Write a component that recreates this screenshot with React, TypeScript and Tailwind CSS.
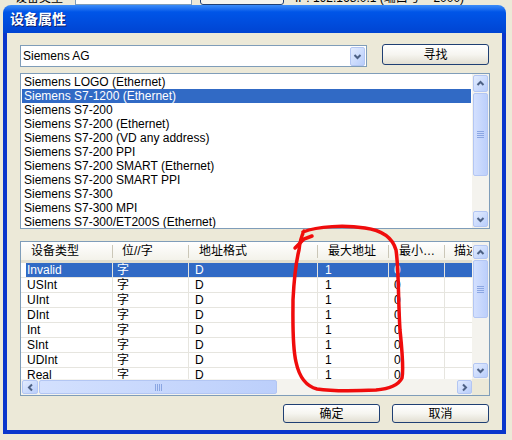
import React from 'react';

const devices = [
  'Siemens LOGO (Ethernet)',
  'Siemens S7-1200 (Ethernet)',
  'Siemens S7-200',
  'Siemens S7-200 (Ethernet)',
  'Siemens S7-200 (VD any address)',
  'Siemens S7-200 PPI',
  'Siemens S7-200 SMART (Ethernet)',
  'Siemens S7-200 SMART PPI',
  'Siemens S7-300',
  'Siemens S7-300 MPI',
  'Siemens S7-300/ET200S (Ethernet)',
];

const types = ['Invalid', 'USInt', 'UInt', 'DInt', 'Int', 'SInt', 'UDInt', 'Real'];

// column widths / paddings, written out in full so tailwind picks them up
const columns = [
  { title: '设备类型', w: 'w-[92px]', head: 'pl-[10px]', cell: 'pl-[6px]' },
  { title: '位//字', w: 'w-[76px]', head: 'pl-[9px]', cell: 'pl-[4px]' },
  { title: '地址格式', w: 'w-[129px]', head: 'pl-[10px]', cell: 'pl-[6px]' },
  { title: '最大地址', w: 'w-[71px]', head: 'pl-[10px]', cell: 'pl-[7px]' },
  { title: '最小…', w: 'w-[56px]', head: 'pl-[10px]', cell: 'pl-[5px]' },
  { title: '描述', w: 'w-[80px]', head: 'pl-[9px]', cell: 'pl-[6px]' },
];

type Dir = 'up' | 'down' | 'left' | 'right';

function Chevron({ dir }: { dir: Dir }) {
  const pts = {
    up: '1.5,6 4.5,3 7.5,6',
    down: '1.5,3 4.5,6 7.5,3',
    left: '6,1.5 3,4.5 6,7.5',
    right: '3,1.5 6,4.5 3,7.5',
  }[dir];
  return (
    <svg width="9" height="9" viewBox="0 0 9 9">
      <polyline points={pts} fill="none" stroke="#4d6185" strokeWidth="2" />
    </svg>
  );
}

function ScrollBtn({ dir, className = '' }: { dir: Dir; className?: string }) {
  return (
    <div
      className={`flex shrink-0 items-center justify-center rounded-[2px] border border-[#b3c6f3] bg-linear-to-br from-[#e3ecfe] to-[#b8cdfb] ${className}`}
    >
      <Chevron dir={dir} />
    </div>
  );
}

function Grip({ vertical }: { vertical: boolean }) {
  return (
    <div className={vertical ? 'flex flex-col gap-px' : 'flex gap-px'}>
      {[0, 1, 2, 3].map((i) => (
        <div key={i} className={vertical ? 'h-px w-[7px] bg-[#8ba6e2]' : 'h-[7px] w-px bg-[#8ba6e2]'} />
      ))}
    </div>
  );
}

function Thumb({ vertical, className = '' }: { vertical: boolean; className?: string }) {
  return (
    <div
      className={`flex shrink-0 items-center justify-center rounded-[2px] border border-[#b3c6f3] bg-linear-to-r from-[#d3e0fe] to-[#bccffb] ${className}`}
    >
      <Grip vertical={vertical} />
    </div>
  );
}

function XpButton({ label, className = '' }: { label: string; className?: string }) {
  return (
    <div
      className={`flex items-center justify-center rounded-[3px] border border-[#1f3f73] bg-linear-to-b from-white via-[#f6f5f0] to-[#e2dfd2] text-[12px] text-black ${className}`}
    >
      {label}
    </div>
  );
}

function RedCircle() {
  return (
    <svg className="pointer-events-none absolute left-0 top-0" width="512" height="440" viewBox="0 0 512 440">
      <path
        d="M295,248 L304,239 L312,236"
        fill="none"
        stroke="#f00c0c"
        strokeWidth="3.5"
        strokeLinecap="round"
      />
      <path
        d="M303,232 C318,226 345,225 365,228 C380,230 392,236 396,250 C399,270 398,300 400,330 C402,350 404,368 402,378 C398,386 388,389 376,390 C355,391 330,391 317,389 C305,386 299,376 296,362 C292,345 293,320 293,300 C294,280 296,262 299,250 C300,240 302,235 304,231"
        fill="none"
        stroke="#f00c0c"
        strokeWidth="3.5"
        strokeLinecap="round"
      />
    </svg>
  );
}

export default function App() {
  return (
    <div className="relative h-[440px] w-[512px] overflow-hidden bg-[#ece9d8] font-['Liberation_Sans','Noto_Sans_CJK_SC',sans-serif] text-[12px] text-black">
      {/* window behind the dialog, only its bottom edge shows */}
      <div className="h-[5px] overflow-hidden">
        <div className="-mt-[8px] flex h-[13px] items-start">
          <span className="ml-[15px] w-[60px] text-[12px] leading-[13px]">设备类型</span>
          <div className="h-[13px] w-[117px] border border-[#7f9db9] bg-white" />
          <div className="ml-[8px] h-[13px] w-[84px] rounded-[3px] border border-[#1f3f73] bg-[#f4f3ee]" />
          <span className="ml-[11px] text-[12px] leading-[13px]">IP: 192.168.0.1 (端口号 = 2000)</span>
        </div>
      </div>

      {/* dialog */}
      <div className="ml-[3px] flex h-[429px] w-[503px] flex-col">
        <div className="flex h-[28px] shrink-0 items-center rounded-t-[8px] bg-linear-to-b from-[#3b8cf8] via-[#0055e8] via-25% to-[#0044d2] pl-[7px]">
          <span className="text-[14px] font-bold text-white [text-shadow:1px_1px_0_#0a1e6a]">设备属性</span>
        </div>
        <div className="flex flex-1 flex-col border-x-4 border-b-4 border-[#0a36cc] pl-[13px]">
          {/* vendor combo + search */}
          <div className="flex items-start pt-[11px]">
            <div className="mt-px flex h-[22px] w-[347px] items-center border border-[#7f9db9] bg-white pl-[2px]">
              <span className="flex-1">Siemens AG</span>
              <ScrollBtn dir="down" className="mr-px h-[19px] w-[15px]" />
            </div>
            <XpButton label="寻找" className="ml-[15px] h-[21px] w-[107px]" />
          </div>

          {/* device list */}
          <div className="mt-[6px] flex h-[156px] w-[470px] border border-[#7f9db9] bg-white">
            <div className="flex-1 overflow-hidden p-px">
              {devices.map((d, i) => (
                <div
                  key={d}
                  className={`h-[14px] pl-[2px] leading-[14px] whitespace-nowrap ${i === 1 ? 'bg-[#316ac5] text-white' : ''}`}
                >
                  {d}
                </div>
              ))}
            </div>
            <div className="flex w-[17px] flex-col bg-[#f4f3ee] p-px">
              <ScrollBtn dir="up" className="h-[17px]" />
              <Thumb vertical className="mt-px h-[83px]" />
              <div className="flex-1" />
              <ScrollBtn dir="down" className="h-[16px]" />
            </div>
          </div>

          {/* data types list view */}
          <div className="mt-[12px] flex h-[155px] w-[470px] flex-col border border-[#7f9db9] bg-white">
            <div className="flex min-h-0 flex-1">
              <div className="min-w-0 flex-1 overflow-hidden">
                <div className="flex h-[21px] border-b-[3px] border-[#e2dfd0] bg-linear-to-b from-white to-[#f3f2ea]">
                  {columns.map((c) => (
                    <div key={c.title} className={`flex shrink-0 items-center ${c.w}`}>
                      <span className={`flex-1 whitespace-nowrap ${c.head}`}>{c.title}</span>
                      <div className="h-[13px] w-px bg-[#cbc7b8]" />
                    </div>
                  ))}
                </div>
                {types.map((t, r) => {
                  const sel = r === 0;
                  const cells = [t, '字', 'D', '1', '0', ''];
                  return (
                    <div key={t} className="flex h-[15px] border-b border-[#e6e5df]">
                      {columns.map((c, ci) => (
                        <div
                          key={c.title}
                          className={`flex shrink-0 border-r border-[#e6e5df] ${c.w} ${ci === 0 ? 'pl-[5px]' : ''}`}
                        >
                          <div
                            className={`flex-1 leading-[14px] whitespace-nowrap ${sel ? 'bg-[#316ac5] text-white' : ''} ${ci === 0 ? 'pl-px' : c.cell}`}
                          >
                            {cells[ci]}
                          </div>
                        </div>
                      ))}
                    </div>
                  );
                })}
              </div>
              <div className="flex w-[17px] flex-col bg-[#f4f3ee] px-px pt-[3px] pb-px">
                <ScrollBtn dir="up" className="h-[14px]" />
                <Thumb vertical className="mt-px h-[58px]" />
                <div className="flex-1" />
                <ScrollBtn dir="down" className="h-[15px]" />
              </div>
            </div>
            <div className="flex h-[16px] shrink-0">
              <div className="flex flex-1 bg-[#f4f3ee] py-px pl-px">
                <ScrollBtn dir="left" className="w-[16px]" />
                <Thumb vertical={false} className="ml-px w-[238px]" />
                <div className="flex-1" />
                <ScrollBtn dir="right" className="w-[15px]" />
              </div>
              <div className="w-[17px] bg-[#ece9d8]" />
            </div>
          </div>

          {/* dialog buttons */}
          <div className="mt-[8px] flex">
            <XpButton label="确定" className="ml-[263px] h-[19px] w-[97px]" />
            <XpButton label="取消" className="ml-[12px] h-[19px] w-[97px]" />
          </div>
        </div>
      </div>

      <RedCircle />
    </div>
  );
}
